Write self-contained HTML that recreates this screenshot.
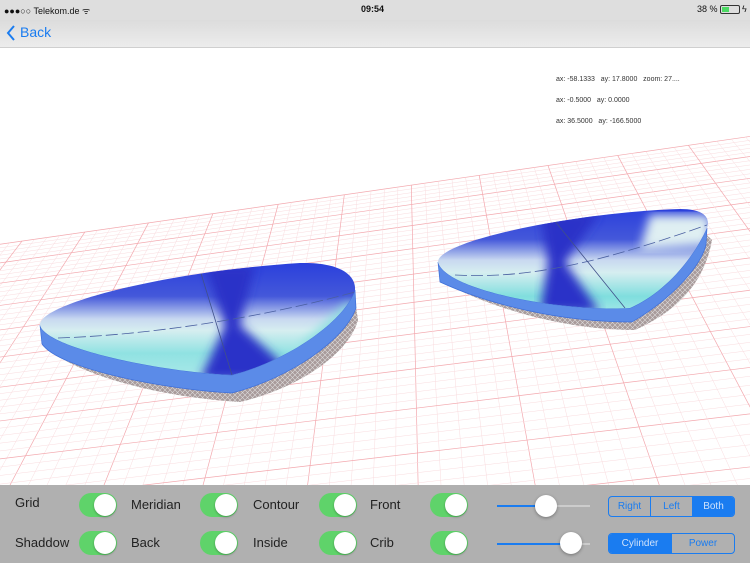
<!DOCTYPE html>
<html><head><meta charset="utf-8"><style>
*{margin:0;padding:0;box-sizing:border-box}
html,body{width:750px;height:563px;overflow:hidden}
body{background:#fff;font-family:"Liberation Sans",sans-serif;position:relative}
#status{position:absolute;left:0;top:0;width:750px;height:20px;background:#dedede;font-size:9px;color:#111}
#nav{position:absolute;left:0;top:20px;width:750px;height:28px;background:linear-gradient(#dcdcdc,#ececec);border-bottom:1px solid #cfcfcf}
#stage{position:absolute;left:0;top:48px;display:block}
#panel{position:absolute;left:0;top:485px;width:750px;height:78px;background:rgba(170,170,170,0.93)}
.lbl{position:absolute;font-size:13px;color:#222}
.tg{position:absolute;width:38px;height:24px;border-radius:12px;background:#5fd36a}
.tg::after{content:"";position:absolute;right:1px;top:1px;width:22px;height:22px;border-radius:11px;background:#fff;box-shadow:0 1px 2px rgba(0,0,0,.3)}
.sl{position:absolute;height:2px;background:#ccc;width:93px;left:497px}
.sl i{position:absolute;left:0;top:0;height:2px;background:#1a7cf0}
.th{position:absolute;width:22px;height:22px;border-radius:11px;background:#fff;box-shadow:0 1px 3px rgba(0,0,0,.35)}
.seg{position:absolute;display:flex;border:1px solid #1a7cf0;border-radius:4px;overflow:hidden;height:21px;left:608px;width:127px}
.seg div{flex:1;text-align:center;font-size:10px;line-height:19px;color:#1a7cf0;border-left:1px solid #1a7cf0}
.seg div:first-child{border-left:none}
.seg .on{background:#1a7cf0;color:#cfe2fb}
.info{position:absolute;font-size:7px;color:#333;left:556px}
</style></head><body>
<div id="status">
<span style="position:absolute;left:4px;top:4px">●●●○○ Telekom.de ᯤ</span>
<span style="position:absolute;left:361px;top:4px;font-weight:bold">09:54</span>
<span style="position:absolute;left:697px;top:4px">38 %</span>
<span style="position:absolute;left:720px;top:5px;width:20px;height:9px;border:1px solid #333;border-radius:2px"><i style="position:absolute;left:1px;top:1px;width:7px;height:5px;background:#4cd964"></i></span>
<span style="position:absolute;left:742px;top:4px">ϟ</span>
</div>
<div id="nav">
<svg style="position:absolute;left:6px;top:5px" width="10" height="16"><path d="M8 1 L2 8 L8 15" fill="none" stroke="#1a7cf0" stroke-width="2"/></svg>
<span style="position:absolute;left:20px;top:4px;font-size:14px;color:#1a7cf0">Back</span>
</div>
<svg id="stage" width="750" height="437" viewBox="0 48 750 437">
<defs>
<linearGradient id="g1" gradientUnits="userSpaceOnUse" x1="0" y1="262" x2="0" y2="376"><stop offset="0" stop-color="#2a3fdc"/><stop offset=".3" stop-color="#4458da"/><stop offset=".5" stop-color="#c8d8f0"/><stop offset=".6" stop-color="#d6eef0"/><stop offset=".8" stop-color="#90e2e2"/><stop offset="1" stop-color="#a8e8e8"/></linearGradient>
<linearGradient id="g2" gradientUnits="userSpaceOnUse" x1="0" y1="208" x2="0" y2="312"><stop offset="0" stop-color="#2a3fdc"/><stop offset=".3" stop-color="#4458da"/><stop offset=".5" stop-color="#c8d8f0"/><stop offset=".62" stop-color="#d6eef0"/><stop offset=".85" stop-color="#80dede"/><stop offset="1" stop-color="#a0e6e6"/></linearGradient>
<filter id="bl"><feGaussianBlur stdDeviation="5"/></filter>
<pattern id="hx" width="5" height="5" patternUnits="userSpaceOnUse"><rect width="5" height="5" fill="#a89a9a"/><path d="M0 0L5 5M5 0L0 5" stroke="#ddd" stroke-width=".6"/></pattern>
<clipPath id="c1"><path d="M40 325 C38 305 160 272 300 263 C340 262 356 275 355 290 C345 320 290 360 232 375 C160 372 45 348 40 325Z"/></clipPath>
<clipPath id="c2"><path d="M438 262 C438 240 580 212 680 209 C705 209 710 218 707 228 C690 265 660 295 630 308 C560 312 445 290 438 262Z"/></clipPath>
</defs>
<g id="grid"></g>
<!-- left lens -->
<path d="M48 350 C90 380 170 398 240 402 C300 388 350 352 358 320 L355 300 C300 340 240 370 232 375 C160 372 80 345 44 330Z" fill="url(#hx)"/>
<path d="M40 325 L42 344 C60 370 170 390 232 393 C290 378 345 340 356 308 L355 290 C345 320 290 360 232 375 C160 372 45 348 40 325Z" fill="#5b8be8" stroke="#3e6fd8" stroke-width=".7"/>
<g clip-path="url(#c1)">
<rect x="38" y="260" width="322" height="120" fill="url(#g1)"/>
<path d="M205 265 L255 265 L240 325 L300 380 L200 380 L225 325Z" fill="#2a30c8" filter="url(#bl)"/>
<path d="M300 345 L350 300 L360 330 L320 360Z" fill="#8fe0e0" filter="url(#bl)"/>
<path d="M58 338 C150 335 260 318 355 292" fill="none" stroke="#4a5fa0" stroke-width=".8" stroke-dasharray="12 4"/>
<path d="M200 270 L232 375" stroke="#40508a" stroke-width=".8"/>
</g>
<!-- right lens -->
<path d="M442 282 C500 312 570 330 635 330 C680 310 705 280 712 240 L707 235 C690 270 660 300 630 312 C560 318 480 296 440 270Z" fill="url(#hx)"/>
<path d="M438 262 L440 282 C490 305 560 322 632 322 C670 300 700 268 706 245 L707 228 C690 265 660 295 630 308 C560 312 445 290 438 262Z" fill="#5b8be8" stroke="#3e6fd8" stroke-width=".7"/>
<g clip-path="url(#c2)">
<rect x="435" y="205" width="280" height="110" fill="url(#g2)"/>
<path d="M540 212 L600 212 L565 262 L600 312 L540 312 L548 262Z" fill="#2a30c8" filter="url(#bl)"/>
<path d="M650 215 L710 215 L710 245 L640 250Z" fill="#dfeff2" filter="url(#bl)"/>
<path d="M455 275 C540 280 620 255 707 225" fill="none" stroke="#4a5fa0" stroke-width=".8" stroke-dasharray="12 4"/>
<path d="M550 215 L625 308" stroke="#40508a" stroke-width=".8"/>
</g>
</svg>
<div class="info" style="top:76px">ax: -58.1333 &nbsp; ay: 17.8000 &nbsp; zoom: 27....</div>
<div class="info" style="top:97px">ax: -0.5000 &nbsp; ay: 0.0000</div>
<div class="info" style="top:118px">ax: 36.5000 &nbsp; ay: -166.5000</div>
<div id="panel">
<span class="lbl" style="left:15px;top:10px">Grid</span>
<span class="lbl" style="left:131px;top:12px">Meridian</span>
<span class="lbl" style="left:253px;top:12px">Contour</span>
<span class="lbl" style="left:370px;top:12px">Front</span>
<span class="lbl" style="left:15px;top:50px">Shaddow</span>
<span class="lbl" style="left:131px;top:50px">Back</span>
<span class="lbl" style="left:253px;top:50px">Inside</span>
<span class="lbl" style="left:370px;top:50px">Crib</span>
<div class="tg" style="left:79px;top:8px"></div><div class="tg" style="left:200px;top:8px"></div><div class="tg" style="left:319px;top:8px"></div><div class="tg" style="left:430px;top:8px"></div>
<div class="tg" style="left:79px;top:46px"></div><div class="tg" style="left:200px;top:46px"></div><div class="tg" style="left:319px;top:46px"></div><div class="tg" style="left:430px;top:46px"></div>
<div class="sl" style="top:20px"><i style="width:49px"></i></div><div class="th" style="left:535px;top:10px"></div>
<div class="sl" style="top:58px"><i style="width:74px"></i></div><div class="th" style="left:560px;top:47px"></div>
<div class="seg" style="top:11px"><div>Right</div><div>Left</div><div class="on">Both</div></div>
<div class="seg" style="top:48px"><div class="on">Cylinder</div><div>Power</div></div>
</div>
<script>
(function(){
var P=[[-40,250],[760,135],[1150,560],[-450,720]];
function H(u,v){
 var x0=P[0][0],y0=P[0][1],x1=P[1][0],y1=P[1][1],x2=P[2][0],y2=P[2][1],x3=P[3][0],y3=P[3][1];
 var dx1=x1-x2,dx2=x3-x2,dy1=y1-y2,dy2=y3-y2,sx=x0-x1+x2-x3,sy=y0-y1+y2-y3;
 var den=dx1*dy2-dx2*dy1;
 var g=(sx*dy2-dx2*sy)/den,h=(dx1*sy-sx*dy1)/den;
 var a=x1-x0+g*x1,b=x3-x0+h*x3,d=y1-y0+g*y1,e=y3-y0+h*y3;
 var w=g*u+h*v+1;return [(a*u+b*v+x0)/w,(d*u+e*v+y0)/w];
}
var s='',N=60;
for(var i=0;i<=N;i++){var t=i/N,maj=i%5==0;
 var A=H(t,0),B=H(t,1),C=H(0,t),D=H(1,t);
 var st=maj?'stroke="#f3a8ae" stroke-width="0.7"':'stroke="#f9dcdf" stroke-width="0.5"';
 s+='<line x1="'+A[0]+'" y1="'+A[1]+'" x2="'+B[0]+'" y2="'+B[1]+'" '+st+'/>';
 s+='<line x1="'+C[0]+'" y1="'+C[1]+'" x2="'+D[0]+'" y2="'+D[1]+'" '+st+'/>';}
document.getElementById('grid').innerHTML=s;
})();
</script>
</body></html>
